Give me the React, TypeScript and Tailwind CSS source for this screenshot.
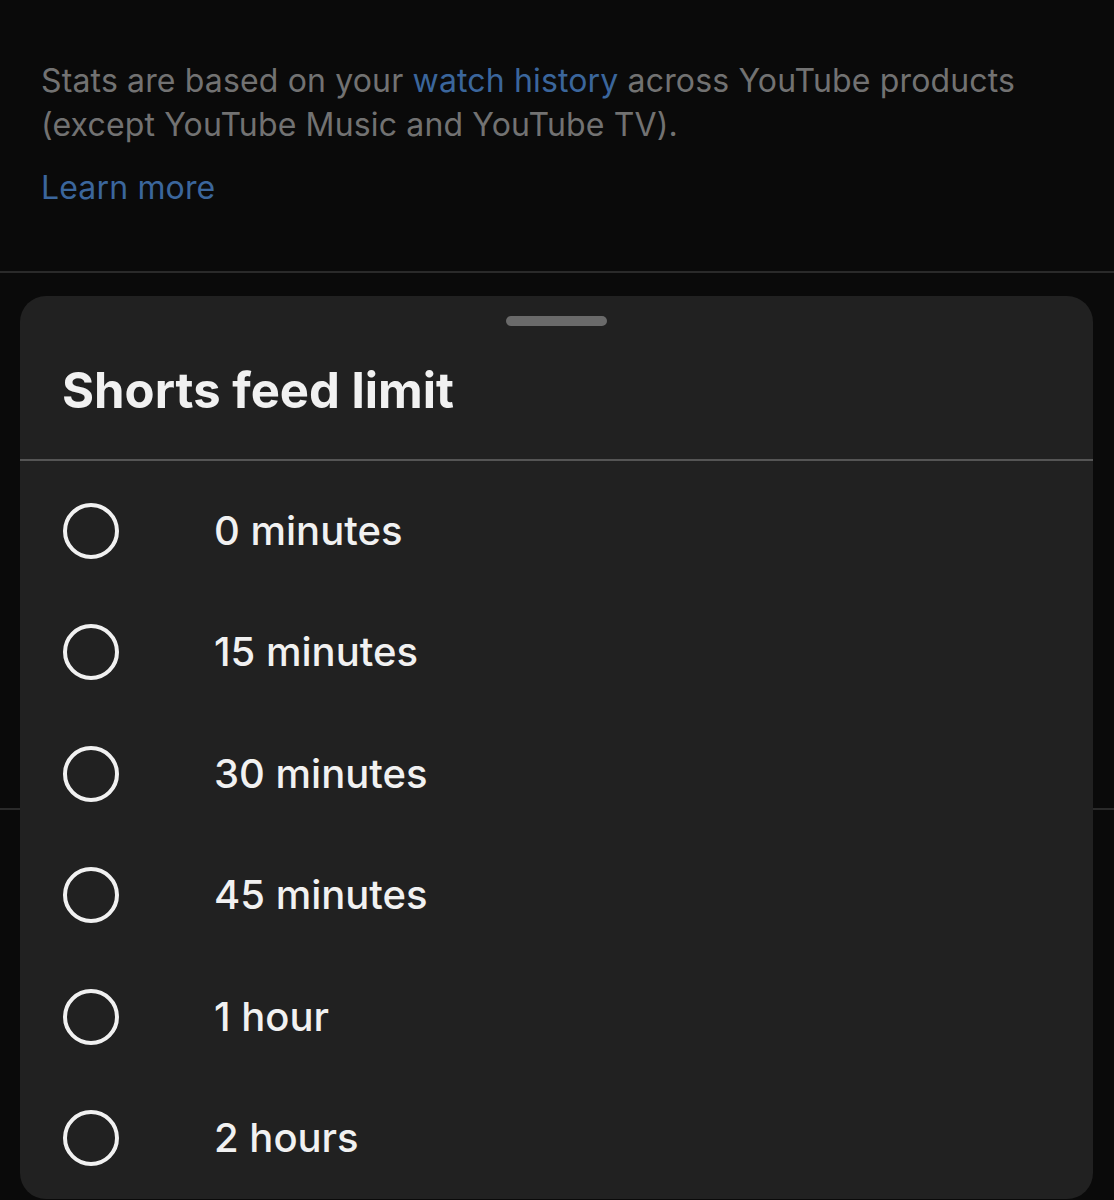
const options = ['0 minutes', '15 minutes', '30 minutes', '45 minutes', '1 hour', '2 hours']

function Radio() {
  return <span className="block h-[56px] w-[56px] shrink-0 rounded-full border-[4px] border-[#f1f1f1]" />
}

export default function App() {
  return (
    <div className="relative h-[1200px] overflow-hidden bg-[#0a0a0a] font-['Inter',sans-serif]">
      <div className="px-[41px] pt-[59px] pb-[61px]">
        <p className="text-[32px] leading-[44px] tracking-[0.15px] text-[#727272]">
          <span>Stats are based on your </span>
          <a className="text-[#3b669c]">watch history</a>
          <span> across YouTube products (except YouTube Music and YouTube TV).</span>
        </p>
        <p className="mt-[19px] text-[32px] leading-[44px] tracking-[0.15px] text-[#3b669c]">Learn more</p>
      </div>
      <div className="h-[2px] bg-[#2a2a2a]" />
      <div className="h-[535px]" />
      <div className="h-[2px] bg-[#2a2a2a]" />

      {/* bottom sheet */}
      <div className="absolute left-[20px] right-[21px] top-[296px] h-[903px] overflow-hidden rounded-[26px] bg-[#212121]">
        <div className="flex justify-center pt-[20px]">
          <span className="block h-[10px] w-[101px] rounded-full bg-[#6a6a6a]" />
        </div>
        <h2 className="pl-[42px] pt-[36px] pb-[39px] text-[49px] font-bold leading-[58px] text-[#f1f1f1]">
          Shorts feed limit
        </h2>
        <div className="h-[2px] bg-[#555555]" />
        <ul className="pt-[9px]">
          {options.map((o) => (
            <li key={o} className="flex h-[121.5px] items-center pl-[43px]">
              <Radio />
              <span className="ml-[95px] text-[40px] font-medium text-[#f1f1f1]">{o}</span>
            </li>
          ))}
        </ul>
      </div>
    </div>
  )
}
